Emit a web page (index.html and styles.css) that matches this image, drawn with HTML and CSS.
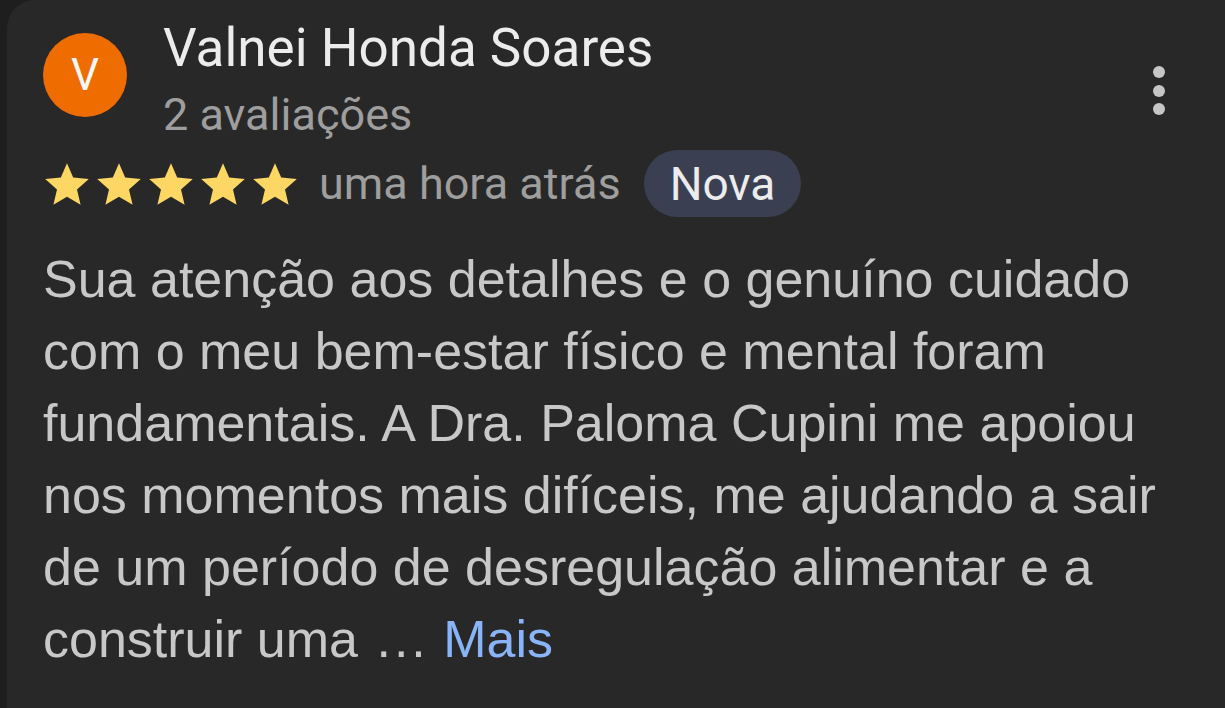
FILE: index.html
```html
<!DOCTYPE html>
<html lang="pt">
<head>
<meta charset="utf-8">
<link rel="stylesheet" href="styles.css">
</head>
<body>
<div class="card">
  <div class="header">
    <div class="avatar">V</div>
    <div class="who">
      <div class="name">Valnei Honda Soares</div>
      <div class="count">2 avaliações</div>
    </div>
    <div class="menu" aria-label="Mais opções">
      <span></span><span></span><span></span>
    </div>
  </div>
  <div class="meta">
    <div class="stars">
      <svg viewBox="0 0 24 24" class="star"><path d="M12 1.6l3.1 7.2 7.8.7-5.9 5.2 1.8 7.7L12 18.4l-6.8 4 1.8-7.7-5.9-5.2 7.8-.7z"/></svg>
      <svg viewBox="0 0 24 24" class="star"><path d="M12 1.6l3.1 7.2 7.8.7-5.9 5.2 1.8 7.7L12 18.4l-6.8 4 1.8-7.7-5.9-5.2 7.8-.7z"/></svg>
      <svg viewBox="0 0 24 24" class="star"><path d="M12 1.6l3.1 7.2 7.8.7-5.9 5.2 1.8 7.7L12 18.4l-6.8 4 1.8-7.7-5.9-5.2 7.8-.7z"/></svg>
      <svg viewBox="0 0 24 24" class="star"><path d="M12 1.6l3.1 7.2 7.8.7-5.9 5.2 1.8 7.7L12 18.4l-6.8 4 1.8-7.7-5.9-5.2 7.8-.7z"/></svg>
      <svg viewBox="0 0 24 24" class="star"><path d="M12 1.6l3.1 7.2 7.8.7-5.9 5.2 1.8 7.7L12 18.4l-6.8 4 1.8-7.7-5.9-5.2 7.8-.7z"/></svg>
    </div>
    <span class="when">uma hora atrás</span>
    <span class="badge">Nova</span>
  </div>
  <p class="text">Sua atenção aos detalhes e o genuíno cuidado<br>com o meu bem-estar físico e mental foram<br>fundamentais. A Dra. Paloma Cupini me apoiou<br>nos momentos mais difíceis, me ajudando a sair<br>de um período de desregulação alimentar e a<br>construir uma <span class="dots">...</span> <a class="more">Mais</a></p>
</div>
</body>
</html>
```

FILE: styles.css
```css
html, body {
  margin: 0;
  padding: 0;
  background: #1e1e1e;
  width: 1225px;
  height: 708px;
  overflow: hidden;
}
body {
  font-family: "Liberation Sans", Arial, sans-serif;
  padding-left: 7px;
  box-sizing: border-box;
}
.card {
  background: #282828;
  border-top-left-radius: 28px;
  height: 708px;
  box-sizing: border-box;
  padding: 33px 0 0 36px;
}
.header {
  display: flex;
  align-items: flex-start;
}
.avatar {
  width: 84px;
  height: 84px;
  border-radius: 50%;
  background: #ef6c00;
  color: #f8f8f8;
  font-family: Roboto, sans-serif;
  font-size: 44px;
  display: flex;
  align-items: center;
  justify-content: center;
  flex: none;
}
.who {
  margin-left: 36px;
  margin-top: -14px;
  flex: 1;
}
.name {
  font-family: Roboto, sans-serif;
  color: #ececec;
  font-size: 53px;
  line-height: 58px;
}
.count {
  font-family: Roboto, sans-serif;
  color: #9e9e9e;
  font-size: 45px;
  line-height: 50px;
  margin-top: 13px;
}
.menu {
  display: flex;
  flex-direction: column;
  gap: 6.5px;
  margin-top: 33px;
  margin-right: 60px;
}
.menu span {
  width: 12px;
  height: 12px;
  border-radius: 50%;
  background: #c6c6c6;
}
.meta {
  display: flex;
  align-items: center;
  margin-top: 10px;
}
.stars {
  display: flex;
  gap: 4px;
}
.star {
  width: 48px;
  height: 48px;
  fill: #fdd663;
}
.when {
  font-family: Roboto, sans-serif;
  color: #9e9e9e;
  font-size: 45px;
  margin-left: 20px;
}
.badge {
  font-family: Roboto, sans-serif;
  background: #3b3f52;
  color: #ececec;
  font-size: 46px;
  line-height: 46px;
  border-radius: 34px;
  padding: 10.5px 26px;
  margin-left: 23px;
}
.text {
  margin: 26px 0 0 0;
  color: #c8c8c8;
  font-size: 52px;
  line-height: 72px;
}
.dots {
  letter-spacing: 3px;
  margin-left: 4px;
}
.more {
  color: #8ab4f8;
}
```
